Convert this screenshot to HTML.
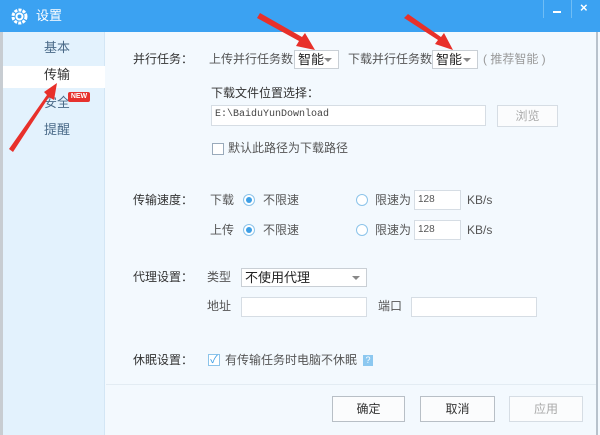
<!DOCTYPE html>
<html><head><meta charset="utf-8"><style>
*{margin:0;padding:0;box-sizing:border-box}
body{width:600px;height:435px;position:relative;overflow:hidden;background:#f3f9fe;font-family:"Liberation Sans","Noto Sans CJK SC",sans-serif;font-size:12px;color:#555}
.a{position:absolute;white-space:nowrap}
.t{line-height:16px}
.box{position:absolute;background:#fff;border:1px solid #d6dde4}
.sel{position:absolute;background:#fff;border:1px solid #c9cfd5;color:#222;font-size:13px;line-height:17px;padding-left:3px}
.sel:after{content:"";position:absolute;right:6px;top:7px;border:4px solid transparent;border-top:4px solid #888;border-bottom:0}
.lab{color:#333;font-size:12px}
.rad{position:absolute;width:12px;height:12px;border-radius:50%;border:1px solid #8cc4ea;background:#fff}
.rad.on:after{content:"";position:absolute;left:2px;top:2px;width:6px;height:6px;border-radius:50%;background:#3d9fe6}
.btn{position:absolute;background:#fbfcfd;border:1px solid #b8bfc6;text-align:center;line-height:24px;color:#333}
</style></head><body>
<div class="a" style="left:0;top:0;width:3px;height:435px;background:#c8cdd2"></div>
<div class="a" style="left:0;top:0;width:600px;height:32px;background:#3ba2f2"></div>
<svg class="a" style="left:10px;top:7px" width="19" height="19" viewBox="0 0 19 19"><circle cx="9.5" cy="9.5" r="6.5" fill="none" stroke="#fff" stroke-width="3" stroke-dasharray="3 1.2"/><circle cx="9.5" cy="9.5" r="3" fill="none" stroke="#fff" stroke-width="2"/></svg>
<div class="a t" style="left:36px;top:8px;color:#fff;font-size:13px">设置</div>
<div class="a" style="left:543px;top:0;width:1px;height:18px;background:#6fbdf5"></div>
<div class="a" style="left:571px;top:0;width:1px;height:18px;background:#6fbdf5"></div>
<div class="a" style="left:553px;top:11px;width:8px;height:2px;background:#fff"></div>
<div class="a" style="left:580px;top:0px;color:#fff;font-size:13px;font-weight:bold">×</div>
<div class="a" style="left:596px;top:32px;width:2px;height:403px;background:#b8c2cc"></div>
<div class="a" style="left:3px;top:32px;width:102px;height:403px;background:#e3f2fd;border-right:1px solid #d3e6f5"></div>
<div class="a" style="left:3px;top:66px;width:102px;height:22px;background:#fff"></div>
<div class="a t" style="left:44px;top:40px;color:#4a6a88;font-size:13px">基本</div>
<div class="a t" style="left:44px;top:67px;color:#333;font-size:13px">传输</div>
<div class="a t" style="left:44px;top:95px;color:#4a6a88;font-size:13px">安全</div>
<div class="a" style="left:68px;top:92px;width:22px;height:10px;background:#e6322e;border-radius:2px;color:#fff;font-size:7px;line-height:10px;text-align:center;font-weight:bold">NEW</div>
<div class="a t" style="left:44px;top:122px;color:#4a6a88;font-size:13px">提醒</div>
<div class="a t lab" style="left:133px;top:51px">并行任务：</div>
<div class="a t" style="left:209px;top:51px">上传并行任务数</div>
<div class="sel" style="left:294px;top:50px;width:45px;height:19px">智能</div>
<div class="a t" style="left:348px;top:51px">下载并行任务数</div>
<div class="sel" style="left:432px;top:50px;width:46px;height:19px">智能</div>
<div class="a t" style="left:483px;top:51px;color:#999">( 推荐智能 )</div>
<div class="a t lab" style="left:211px;top:85px">下载文件位置选择：</div>
<div class="box" style="left:211px;top:105px;width:275px;height:21px"></div>
<div class="a t" style="left:215px;top:107px;font-family:'Liberation Mono',monospace;font-size:10px;color:#444">E:\BaiduYunDownload</div>
<div class="btn" style="left:497px;top:105px;width:61px;height:22px;line-height:20px;color:#aaa;border-color:#d6dde4">浏览</div>
<div class="box" style="left:212px;top:143px;width:12px;height:12px;border-color:#9ab"></div>
<div class="a t" style="left:228px;top:140px">默认此路径为下载路径</div>
<div class="a t lab" style="left:133px;top:192px">传输速度：</div>
<div class="a t" style="left:210px;top:192px">下载</div>
<div class="rad on" style="left:243px;top:194px"></div>
<div class="a t" style="left:263px;top:192px">不限速</div>
<div class="rad" style="left:356px;top:194px"></div>
<div class="a t" style="left:375px;top:192px">限速为</div>
<div class="box" style="left:414px;top:190px;width:47px;height:20px"></div>
<div class="a t" style="left:418px;top:192px;font-size:10px">128</div>
<div class="a t" style="left:467px;top:192px">KB/s</div>
<div class="a t" style="left:210px;top:222px">上传</div>
<div class="rad on" style="left:243px;top:224px"></div>
<div class="a t" style="left:263px;top:222px">不限速</div>
<div class="rad" style="left:356px;top:224px"></div>
<div class="a t" style="left:375px;top:222px">限速为</div>
<div class="box" style="left:414px;top:220px;width:47px;height:20px"></div>
<div class="a t" style="left:418px;top:222px;font-size:10px">128</div>
<div class="a t" style="left:467px;top:222px">KB/s</div>
<div class="a t lab" style="left:133px;top:269px">代理设置：</div>
<div class="a t" style="left:207px;top:269px">类型</div>
<div class="sel" style="left:241px;top:268px;width:126px;height:19px">不使用代理</div>
<div class="a t" style="left:207px;top:298px">地址</div>
<div class="box" style="left:241px;top:297px;width:126px;height:20px"></div>
<div class="a t" style="left:378px;top:298px">端口</div>
<div class="box" style="left:411px;top:297px;width:126px;height:20px"></div>
<div class="a t lab" style="left:133px;top:352px">休眠设置：</div>
<div class="box" style="left:208px;top:354px;width:12px;height:12px;border-color:#8cc4ea;color:#3d9fe6;font-size:11px;line-height:10px;text-align:center">✓</div>
<div class="a t" style="left:225px;top:352px">有传输任务时电脑不休眠</div>
<div class="a" style="left:363px;top:355px;width:10px;height:11px;background:#8cc8f0;color:#fff;font-size:9px;line-height:11px;text-align:center">?</div>
<div class="a" style="left:106px;top:384px;width:490px;height:1px;background:#e3ecf3"></div>
<div class="btn" style="left:332px;top:396px;width:73px;height:26px">确定</div>
<div class="btn" style="left:420px;top:396px;width:75px;height:26px">取消</div>
<div class="btn" style="left:509px;top:396px;width:74px;height:26px;color:#aaa;border-color:#d6dde4">应用</div>
<svg class="a" style="left:0;top:0" width="600" height="435">
<g fill="#e8302a">
<polygon points="9,149 13,152 49,97 54,100 57,83 44,92 47,95"/>
<polygon points="257,18 260,13 302,37 305,33 315,50 296,46 299,41"/>
<polygon points="404,18 408,14 441,37 444,33 453,50 435,44 438,40"/>
</g></svg>
</body></html>
